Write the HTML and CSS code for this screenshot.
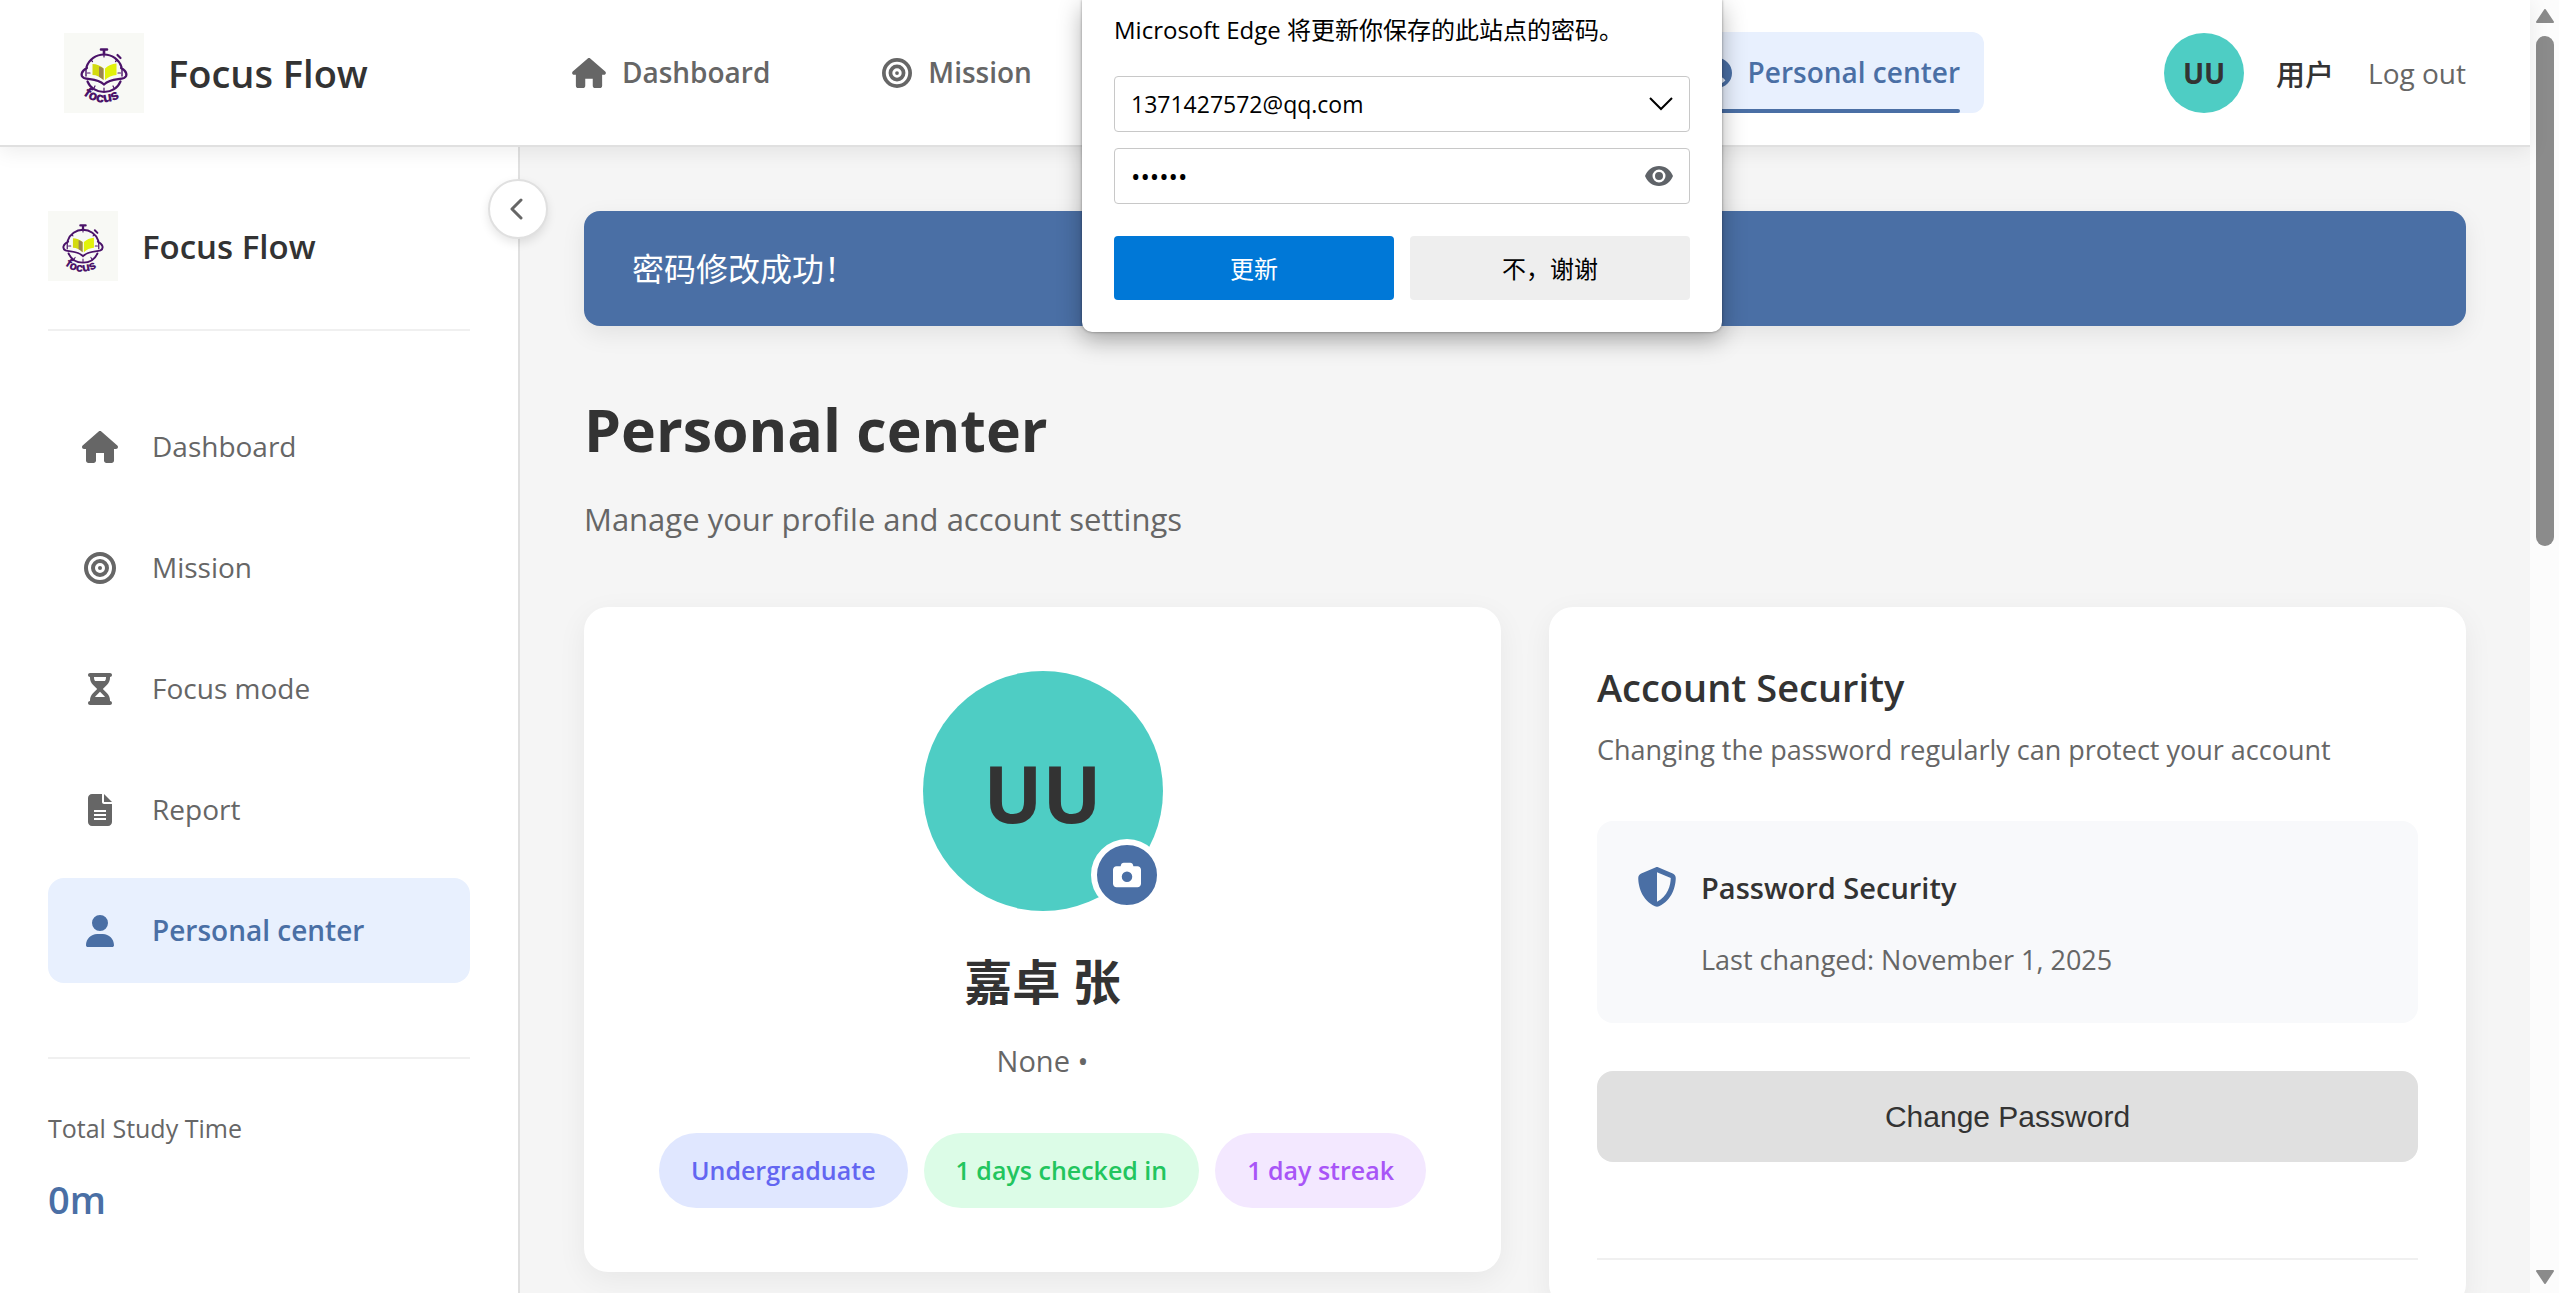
FILE: index.html
```
<!DOCTYPE html>
<html lang="en">
  <head>
    <meta charset="UTF-8">
    <title>Personal center - Focus Flow</title>
    <link rel="stylesheet" href="styles.css">
  </head>
  <body>
    <!-- shared icons -->
    <svg class="sprite" aria-hidden="true">
      <symbol id="icon-home" viewBox="0 0 576 512"><path d="M575.8 255.5c0 18-15 32.1-32 32.1h-32l.7 184.4c0 22.1-17.9 40-40 40H392c-22.1 0-40-17.9-40-40V352H224v120c0 22.1-17.9 40-40 40H104c-22.1 0-40-17.9-40-40V287.6H32c-18 0-32-14-32-32.1c0-9 3-17 10-24L266.4 8c7-7 15-8 22-8s15 2 21 7L564.8 231.5c8 7 12 15 11 24z"/></symbol>
      <symbol id="icon-target" viewBox="0 0 512 512"><g fill="none" stroke="currentColor" stroke-width="64"><circle cx="256" cy="256" r="224"/><circle cx="256" cy="256" r="112"/></g><circle cx="256" cy="256" r="32"/></symbol>
      <symbol id="icon-hourglass" viewBox="0 0 384 512"><path d="M32 0C14.3 0 0 14.3 0 32S14.3 64 32 64V75c0 42.4 16.9 83.1 46.9 113.1L146.7 256 78.9 323.9C48.9 353.9 32 394.6 32 437v11c-17.7 0-32 14.3-32 32s14.3 32 32 32H352c17.7 0 32-14.3 32-32s-14.3-32-32-32V437c0-42.4-16.9-83.1-46.9-113.1L237.3 256l67.9-67.9c30-30 46.9-70.7 46.9-113.1V64c17.7 0 32-14.3 32-32s-14.3-32-32-32H32zM96 75V64H288V75c0 19-5.6 37.4-16 53H112c-10.3-15.6-16-34-16-53zm16 309c3.5-5.3 7.6-10.3 12.1-14.9L192 301.3l67.9 67.9c4.6 4.6 8.6 9.6 12.1 14.9H112z"/></symbol>
      <symbol id="icon-file" viewBox="0 0 384 512"><path d="M64 0C28.7 0 0 28.7 0 64V448c0 35.3 28.7 64 64 64H320c35.3 0 64-28.7 64-64V160H256c-17.7 0-32-14.3-32-32V0H64zM256 0V128H384L256 0zM96 256H288v32H96zM96 320H288v32H96zM96 384H288v32H96z" fill-rule="evenodd"/></symbol>
      <symbol id="icon-user" viewBox="0 0 448 512"><path d="M224 256A128 128 0 1 0 224 0a128 128 0 1 0 0 256zm-45.7 48C79.8 304 0 383.8 0 482.3C0 498.7 13.3 512 29.7 512H418.3c16.4 0 29.7-13.3 29.7-29.7C448 383.8 368.2 304 269.7 304H178.3z"/></symbol>
      <symbol id="icon-circle-user" viewBox="0 0 512 512"><path d="M399 384.2C376.9 345.8 335.4 320 288 320H224c-47.4 0-88.9 25.8-111 64.2c35.2 39.2 86.2 63.8 143 63.8s107.8-24.7 143-63.8zM0 256a256 256 0 1 1 512 0A256 256 0 1 1 0 256zm256 16a72 72 0 1 0 0-144 72 72 0 1 0 0 144z"/></symbol>
      <symbol id="logo" viewBox="0 0 80 80">
        <rect width="80" height="80" fill="#f8f9f5"/>
        <path d="M28.5 31c4 0 8 1.500 11 4.500V47c-3-3-7-5-11-5z" fill="#d3da10"/>
        <path d="M35 33.500c2 .6 3 1 4.500 2V47c-1.500-1.500-3-2.500-4.500-3.300z" fill="#9a8552"/>
        <path d="M52.500 30.500c-4.500.5-8.500 2-11.500 5V47c3-3 7-4.500 11.500-5z" fill="#e2f20a"/>
        <g fill="none" stroke="#4b1369" stroke-width="2.200" stroke-linecap="round">
          <path d="M22.500 34a18.500 18.500 0 0 1 35 0"/>
          <path d="M23 35c-6 3-7 8-3 10 5 2 13 0 20 6.500C47 45 55 47 60 45c4-2 3-7-3-10"/>
          <path d="M22 36v7M58 36v7" stroke-width="1.400"/>
          <path d="M23.500 48.500c6 14 27 14 33 0"/>
          <path d="M40 21v3M27 27l1.500 1.500M53 27l-1.500 1.500M23.500 40h2.500M54 40h2.500M40 55v3M31 53l-1 2M49 53l1 2" stroke-width="1.200"/>
          <path d="M37 16.500h6M40 17v4" stroke-width="2.600"/>
          <path d="M53.500 22l3 3" stroke-width="2.200"/>
        </g>
        <path id="logo-arc" d="M19 62Q40 78 63 60" fill="none"/>
        <text class="logo-text" fill="#4b1369"><textPath href="#logo-arc">focus</textPath></text>
      </symbol>
    </svg>

    <div class="page">
      <header class="header">
        <a href="#" class="brand">
          <svg class="brand-logo"><use href="#logo"/></svg>
          <span>Focus Flow</span>
        </a>
        <nav class="top-nav">
          <a href="#"><svg class="icon icon-wide"><use href="#icon-home"/></svg>Dashboard</a>
          <a href="#"><svg class="icon"><use href="#icon-target"/></svg>Mission</a>
          <a href="#"><svg class="icon icon-narrow"><use href="#icon-hourglass"/></svg>Focus mode</a>
          <a href="#"><svg class="icon icon-narrow"><use href="#icon-file"/></svg>Report</a>
          <a href="#" class="active"><svg class="icon"><use href="#icon-circle-user"/></svg>Personal center</a>
        </nav>
        <div class="user">
          <div class="avatar">UU</div>
          <span class="user-name">用户</span>
          <a href="#" class="logout">Log out</a>
        </div>
      </header>

      <div class="layout">
        <aside class="sidebar">
          <button class="toggle" aria-label="Collapse sidebar">
            <svg viewBox="0 0 14 22"><path d="M12 2L3 11l9 9"/></svg>
          </button>
          <div class="sidebar-brand">
            <svg class="sidebar-logo"><use href="#logo"/></svg>
            <span>Focus Flow</span>
          </div>
          <nav class="side-nav">
            <a href="#"><svg class="icon"><use href="#icon-home"/></svg>Dashboard</a>
            <a href="#"><svg class="icon"><use href="#icon-target"/></svg>Mission</a>
            <a href="#"><svg class="icon"><use href="#icon-hourglass"/></svg>Focus mode</a>
            <a href="#"><svg class="icon"><use href="#icon-file"/></svg>Report</a>
            <a href="#" class="active"><svg class="icon"><use href="#icon-user"/></svg>Personal center</a>
          </nav>
          <div class="study-time">
            <div class="study-label">Total Study Time</div>
            <div class="study-value">0m</div>
          </div>
        </aside>

        <main class="content">
          <div class="alert">密码修改成功！</div>
          <h1>Personal center</h1>
          <p class="subtitle">Manage your profile and account settings</p>

          <div class="cards">
            <section class="card profile">
              <div class="profile-avatar">
                UU
                <button class="camera" aria-label="Change avatar">
                  <svg viewBox="0 0 512 512"><path d="M149.100 64.800L138.700 96H64C28.700 96 0 124.700 0 160V416c0 35.300 28.700 64 64 64H448c35.300 0 64-28.700 64-64V160c0-35.300-28.700-64-64-64H373.300L362.900 64.800C356.400 45.200 338.100 32 317.400 32H194.600c-20.700 0-39 13.200-45.500 32.800zM256 192a96 96 0 1 1 0 192 96 96 0 1 1 0-192z"/></svg>
                </button>
              </div>
              <h2>嘉卓 张</h2>
              <p class="profile-info">None •</p>
              <div class="badges">
                <span class="badge badge-blue">Undergraduate</span>
                <span class="badge badge-green">1 days checked in</span>
                <span class="badge badge-purple">1 day streak</span>
              </div>
            </section>

            <section class="card security">
              <h3>Account Security</h3>
              <p class="card-text">Changing the password regularly can protect your account</p>
              <div class="security-box">
                <svg class="shield" viewBox="0 0 512 512"><path d="M256 0c4.600 0 9.200 1 13.400 2.900L457.700 82.800c22 9.300 38.400 31 38.300 57.200c-.5 99.200-41.300 280.700-213.600 363.200c-16.700 8-36.100 8-52.800 0C57.300 420.700 16.500 239.200 16 140c-.1-26.200 16.300-47.900 38.300-57.200L242.700 2.900C246.800 1 251.400 0 256 0zm0 66.800V444.800C394 378 431.100 230.100 432 141.400L256 66.800z"/></svg>
                <div>
                  <h4>Password Security</h4>
                  <p class="card-text">Last changed: November 1, 2025</p>
                </div>
              </div>
              <button class="change-btn">Change Password</button>
              <hr>
            </section>
          </div>
        </main>
      </div>
    </div>

    <div class="scrollbar">
      <svg class="arrow" viewBox="0 0 18 14"><path d="M9 1L17 13H1z"/></svg>
      <div class="thumb"></div>
      <svg class="arrow" viewBox="0 0 18 14"><path d="M1 1H17L9 13z"/></svg>
    </div>

    <!-- browser password prompt -->
    <form class="prompt">
      <p>Microsoft Edge 将更新你保存的此站点的密码。</p>
      <div class="field">
        <select aria-label="Username">
          <option>1371427572@qq.com</option>
        </select>
        <svg class="caret" viewBox="0 0 24 14"><path d="M1 1l11 11L23 1"/></svg>
      </div>
      <div class="field">
        <input type="password" value="123456" aria-label="Password">
        <button type="button" class="eye" aria-label="Show password">
          <svg viewBox="0 0 28 20"><path d="M14 0C7.600 0 2.200 4.100 0 10c2.200 5.900 7.600 10 14 10s11.800-4.100 14-10C25.800 4.100 20.400 0 14 0zm0 16.500a6.500 6.500 0 1 1 0-13 6.500 6.500 0 0 1 0 13zM14 6a4 4 0 1 0 0 8 4 4 0 0 0 0-8z" fill-rule="evenodd"/></svg>
        </button>
      </div>
      <div class="prompt-buttons">
        <button type="button" class="primary">更新</button>
        <button type="button">不，谢谢</button>
      </div>
    </form>
  </body>
</html>
```

FILE: styles.css
```
* {
  margin: 0;
  padding: 0;
  box-sizing: border-box;
}
body {
  display: flex;
  height: 100vh;
  overflow: hidden;
  background-color: #f5f5f5;
  color: #333;
  font-family: "Segoe UI", "Open Sans", "Noto Sans CJK SC", sans-serif;
  font-size: 28px;
}
a {
  color: inherit;
  text-decoration: none;
}
button {
  border: none;
  cursor: pointer;
  font-family: inherit;
}
svg {
  display: block;
  fill: currentColor;
}
.sprite {
  display: none;
}
.logo-text {
  font-family: Inter, sans-serif;
  font-size: 14px;
  font-weight: 800;
}
.page {
  flex: 1;
  min-width: 0;
  display: flex;
  flex-direction: column;
}

/* header */
.header {
  position: relative;
  z-index: 2;
  display: flex;
  justify-content: space-between;
  align-items: center;
  padding: 32px 64px;
  background-color: #fff;
  border-bottom: 2px solid #e0e0e0;
  box-shadow: 0 4px 20px rgba(0, 0, 0, 0.08);
}
.brand {
  display: flex;
  align-items: center;
  gap: 24px;
  font-size: 38px;
  font-weight: 600;
}
.brand-logo {
  width: 80px;
  height: 80px;
}
.top-nav {
  display: flex;
  gap: 64px;
  color: #666;
  font-weight: 600;
  line-height: 49px;
}
.top-nav a {
  position: relative;
  display: flex;
  align-items: center;
  gap: 16px;
  padding: 16px 24px;
  border-radius: 12px;
}
.top-nav .icon {
  width: 30px;
  height: 30px;
}
.top-nav .icon-wide {
  width: 34px;
}
.top-nav .icon-narrow {
  width: 24px;
}
.top-nav .active {
  background-color: #e8f0fe;
  color: #4a6fa5;
}
.top-nav .active::after {
  content: "";
  position: absolute;
  left: 24px;
  right: 24px;
  bottom: 0;
  height: 4px;
  border-radius: 2px;
  background-color: #4a6fa5;
}
.user {
  display: flex;
  align-items: center;
}
.avatar {
  width: 80px;
  height: 80px;
  margin-right: 32px;
  border-radius: 50%;
  background-color: #4ecdc4;
  font-weight: 700;
  line-height: 80px;
  text-align: center;
}
.user-name {
  margin-right: 34px;
  font-size: 29px;
  font-weight: 500;
}
.logout {
  color: #666;
}

/* sidebar */
.layout {
  flex: 1;
  min-height: 0;
  display: flex;
}
.sidebar {
  position: relative;
  flex: none;
  width: 520px;
  padding: 64px 48px;
  background-color: #fff;
  border-right: 2px solid #e0e0e0;
}
.toggle {
  position: absolute;
  top: 32px;
  right: -30px;
  display: flex;
  align-items: center;
  justify-content: center;
  width: 60px;
  height: 60px;
  padding-right: 4px;
  border: 2px solid #e0e0e0;
  border-radius: 50%;
  background-color: #fff;
  color: #666;
  box-shadow: 0 4px 10px rgba(0, 0, 0, 0.1);
}
.toggle svg {
  width: 14px;
  height: 22px;
  fill: none;
  stroke: currentColor;
  stroke-width: 3;
  stroke-linecap: round;
  stroke-linejoin: round;
}
.sidebar-brand {
  display: flex;
  align-items: center;
  gap: 24px;
  padding-bottom: 48px;
  border-bottom: 2px solid #f0f0f0;
  font-size: 33px;
  font-weight: 600;
}
.sidebar-logo {
  width: 70px;
  height: 70px;
}
.side-nav {
  display: flex;
  flex-direction: column;
  gap: 16px;
  margin: 63px 0 74px;
  color: #666;
  line-height: 49px;
}
.side-nav a {
  display: flex;
  align-items: center;
  gap: 32px;
  padding: 28px 32px;
  border-radius: 16px;
}
.side-nav .icon {
  width: 40px;
  height: 32px;
}
.side-nav .active {
  background-color: #e8f0fe;
  color: #4a6fa5;
  font-weight: 600;
}
.study-time {
  padding-top: 46px;
  border-top: 2px solid #f0f0f0;
}
.study-label {
  color: #666;
  font-size: 25px;
  line-height: 46px;
}
.study-value {
  margin-top: 16px;
  color: #4a6fa5;
  font-size: 38px;
  font-weight: 600;
  line-height: 64px;
}

/* content */
.content {
  flex: 1;
  min-width: 0;
  padding: 64px;
}
.alert {
  margin-bottom: 64px;
  padding: 32px 48px;
  border-radius: 16px;
  background-color: #4a6fa5;
  color: #fff;
  font-size: 32px;
  line-height: 51px;
  box-shadow: 0 8px 24px rgba(0, 0, 0, 0.08);
}
h1 {
  font-size: 59px;
  line-height: 78px;
}
.subtitle {
  margin: 27px 0 63px;
  color: #666;
  font-size: 31px;
  line-height: 49px;
}
.cards {
  display: grid;
  grid-template-columns: 1fr 1fr;
  align-items: start;
  gap: 48px;
}
.card {
  border-radius: 24px;
  background-color: #fff;
  box-shadow: 0 8px 30px rgba(0, 0, 0, 0.06);
}
.profile {
  padding: 64px 48px;
  text-align: center;
}
.profile-avatar {
  position: relative;
  width: 240px;
  height: 240px;
  margin: 0 auto 32px;
  border-radius: 50%;
  background-color: #4ecdc4;
  font-size: 78px;
  font-weight: 700;
  line-height: 244px;
}
.camera {
  position: absolute;
  right: 0;
  bottom: 0;
  display: flex;
  align-items: center;
  justify-content: center;
  width: 72px;
  height: 72px;
  border: 6px solid #fff;
  border-radius: 50%;
  background-color: #4a6fa5;
  color: #fff;
}
.camera svg {
  width: 28px;
  height: 28px;
}
h2 {
  font-size: 48px;
  line-height: 78px;
}
.profile-info {
  margin: 16px 0 48px;
  color: #666;
  font-size: 29px;
  line-height: 48px;
}
.badges {
  display: flex;
  justify-content: center;
  gap: 16px;
}
.badge {
  padding: 16px 32px;
  border-radius: 40px;
  font-size: 25px;
  font-weight: 600;
  line-height: 43px;
}
.badge-blue {
  background-color: #e0e7ff;
  color: #6366f1;
}
.badge-green {
  background-color: #dcfce7;
  color: #22c55e;
}
.badge-purple {
  background-color: #f3e8ff;
  color: #a855f7;
}
.security {
  padding: 48px;
}
h3 {
  margin-bottom: 8px;
  font-size: 38px;
  font-weight: 600;
  line-height: 64px;
}
.card-text {
  color: #666;
  font-size: 27px;
  line-height: 46px;
}
.security-box {
  display: flex;
  gap: 24px;
  margin: 48px 0;
  padding: 40px;
  border-radius: 16px;
  background-color: #f8f9fb;
}
.shield {
  width: 40px;
  height: 52px;
  color: #4a6fa5;
}
h4 {
  margin-bottom: 22px;
  font-size: 29px;
  font-weight: 600;
  line-height: 54px;
}
.change-btn {
  width: 100%;
  margin-bottom: 96px;
  padding: 28px;
  border-radius: 16px;
  background-color: #e0e0e0;
  color: #333;
  font-family: "Liberation Sans", Arial, sans-serif;
  font-size: 30px;
  line-height: 35px;
}
hr {
  border: none;
  border-top: 2px solid #f0f0f0;
}

/* scrollbar */
.scrollbar {
  display: flex;
  flex-direction: column;
  align-items: center;
  width: 29px;
  padding: 9px 0;
  background-color: #fcfcfc;
  color: #8b8b8b;
}
.arrow {
  width: 18px;
  height: 14px;
  stroke: currentColor;
  stroke-width: 2;
  stroke-linejoin: round;
}
.thumb {
  width: 18px;
  height: 40%;
  margin: 13px 0 auto;
  border-radius: 9px;
  background-color: #8b8b8b;
}

/* password prompt */
.prompt {
  position: absolute;
  z-index: 3;
  top: 0;
  left: 1082px;
  display: flex;
  flex-direction: column;
  gap: 16px;
  width: 640px;
  padding: 12px 32px 32px;
  border-radius: 0 0 10px 10px;
  background-color: #fff;
  color: #000;
  font-size: 24px;
  box-shadow: 0 0 3px rgba(0, 0, 0, 0.4), 0 8px 24px rgba(0, 0, 0, 0.3);
}
.prompt p {
  margin-bottom: 12px;
  line-height: 36px;
}
.field {
  display: flex;
  align-items: center;
  height: 56px;
  padding: 0 16px;
  border: 1px solid #c8c8c8;
  border-radius: 4px;
}
.field select,
.field input {
  flex: 1;
  min-width: 0;
  border: none;
  background: none;
  color: #000;
  appearance: none;
  font-family: inherit;
  font-size: 23px;
}
.field input {
  font-size: 25px;
}
.caret {
  width: 24px;
  height: 14px;
  fill: none;
  stroke: currentColor;
  stroke-width: 2;
}
.eye {
  background: none;
  color: #5f6368;
}
.eye svg {
  width: 28px;
  height: 20px;
}
.prompt-buttons {
  display: grid;
  grid-template-columns: 1fr 1fr;
  gap: 16px;
  margin-top: 16px;
}
.prompt-buttons button {
  height: 64px;
  padding-bottom: 2px;
  border-radius: 4px;
  background-color: #eee;
  font-size: 24px;
}
.prompt-buttons .primary {
  background-color: #0078d7;
  color: #fff;
}
```
